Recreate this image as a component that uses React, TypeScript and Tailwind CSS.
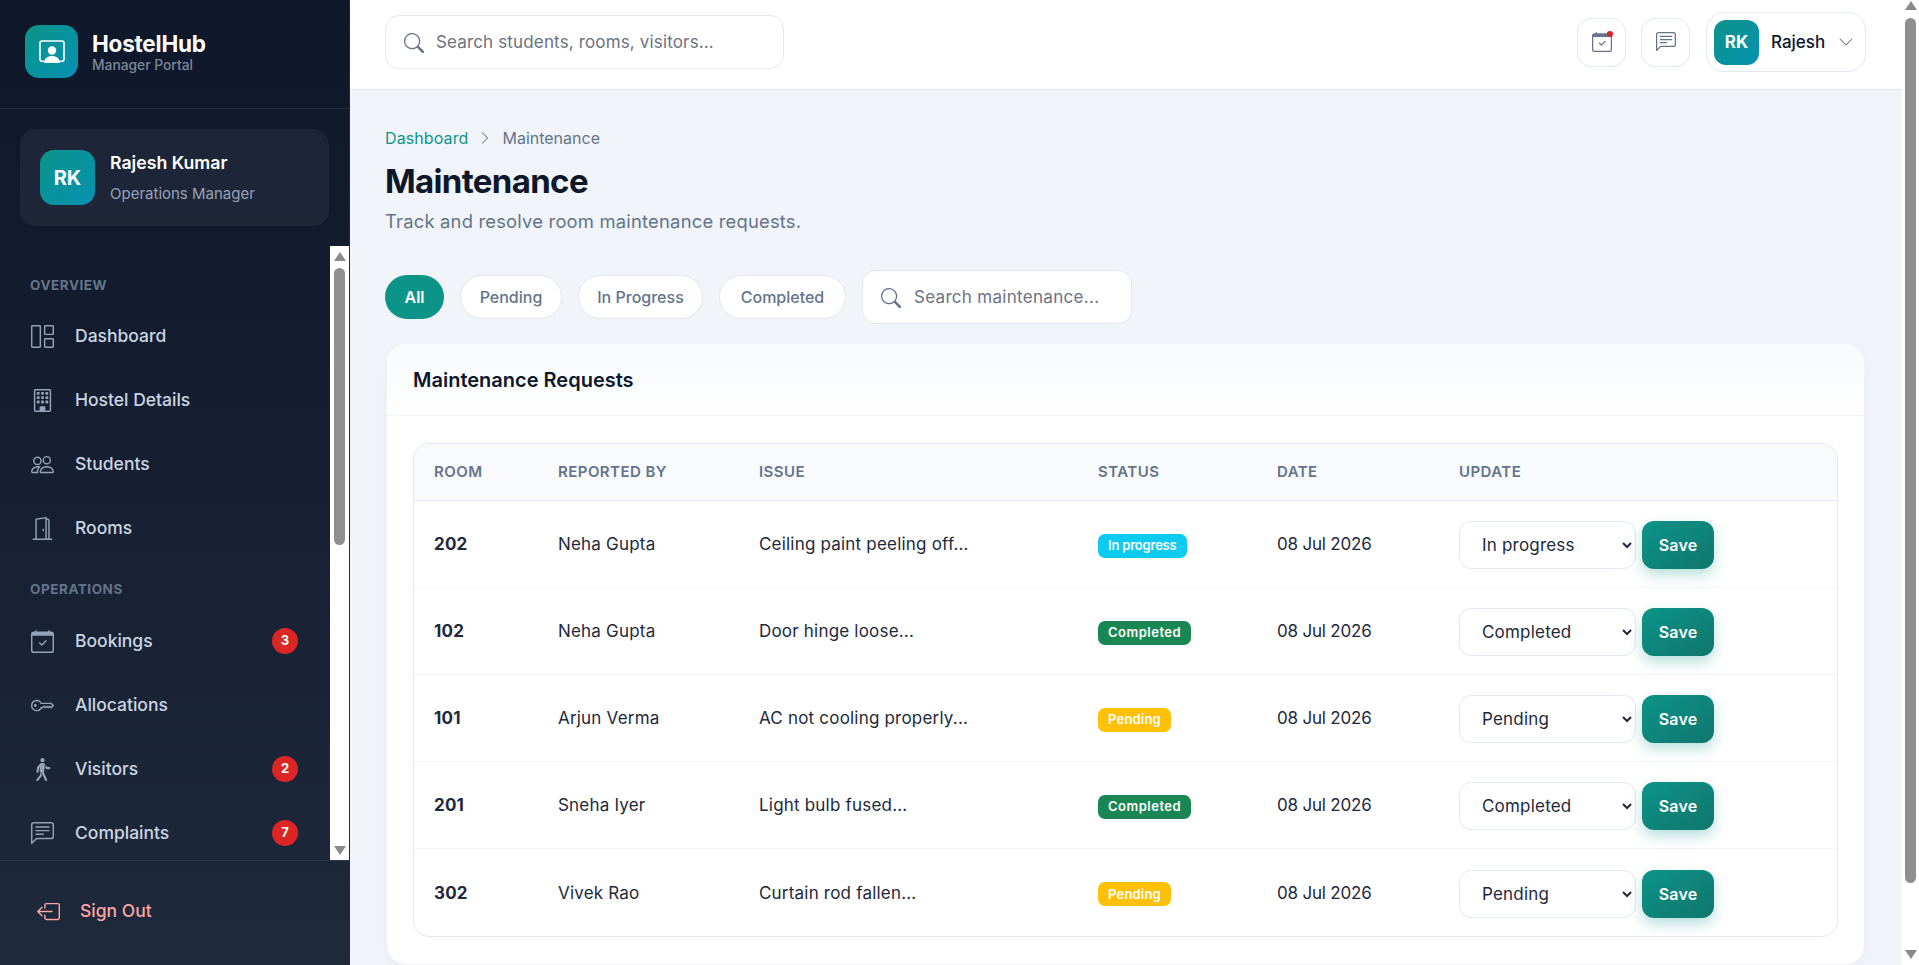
import type { ReactNode } from 'react';
import {
  BsBoxArrowLeft,
  BsBuilding,
  BsCalendarCheck,
  BsChatLeftText,
  BsChevronDown,
  BsChevronRight,
  BsDoorOpen,
  BsGrid1X2,
  BsKey,
  BsPeople,
  BsPersonWalking,
  BsSearch,
} from 'react-icons/bs';

const tealGradient = 'bg-gradient-to-br from-[#0d9488] to-[#0891b2]';

function LogoIcon() {
  return (
    <svg width="26" height="23" viewBox="0 0 26 23" fill="none">
      <path
        d="M5 21.2H3a2 2 0 0 1-2-2V3a2 2 0 0 1 2-2h20a2 2 0 0 1 2 2v16.2a2 2 0 0 1-2 2h-2"
        stroke="white"
        strokeWidth="1.6"
        strokeLinecap="round"
      />
      <circle cx="13" cy="10.5" r="4.2" fill="white" />
      <path d="M5.2 23c0-5 3.6-7 7.8-7s7.8 2 7.8 7z" fill="white" />
    </svg>
  );
}

function NavItem({ icon, label, badge }: { icon: ReactNode; label: string; badge?: number }) {
  return (
    <div className="flex h-[64px] shrink-0 items-center pr-[32px] pl-[30px] text-[17.5px] font-medium text-[#cbd5e1]">
      <span className="flex w-[24px] justify-center text-[23px] text-[#94a3b8]">{icon}</span>
      <span className="ml-[21px] flex-1">{label}</span>
      {badge ? (
        <span className="flex h-[26px] w-[26px] items-center justify-center rounded-full bg-[#dc2626] text-[13px] font-bold text-white">
          {badge}
        </span>
      ) : null}
    </div>
  );
}

function NavLabel({ children, className }: { children: string; className: string }) {
  return (
    <div className={`pl-[30px] text-[13.5px] leading-[18px] font-bold tracking-[0.04em] text-[#64748b] uppercase ${className}`}>
      {children}
    </div>
  );
}

function ScrollArrow({ down }: { down?: boolean }) {
  return (
    <div
      className={`mx-auto h-0 w-0 border-x-[6px] border-x-transparent ${
        down ? 'border-t-[9px] border-t-[#8a8a8a]' : 'border-b-[9px] border-b-[#8a8a8a]'
      }`}
    />
  );
}

function Sidebar() {
  return (
    <aside className="flex h-full w-[350px] shrink-0 flex-col border-r border-[#1e293b] bg-gradient-to-b from-[#0f172a] to-[#1e293b]">
      <div className="flex h-[109px] items-start gap-[14px] border-b border-white/[0.08] pt-[25px] pl-[25px]">
        <div className={`flex h-[53px] w-[53px] items-center justify-center rounded-[14px] ${tealGradient}`}>
          <LogoIcon />
        </div>
        <div className="pt-[5px]">
          <div className="text-[22.5px] leading-[28px] font-bold tracking-[-0.01em] text-white">HostelHub</div>
          <div className="text-[13.8px] leading-[15px] font-medium text-[#7c8798]">Manager Portal</div>
        </div>
      </div>

      <div className="mx-[20px] mt-[20px] flex h-[97px] w-[309px] items-center gap-[15px] rounded-[16px] bg-white/5 pl-[20px]">
        <div className={`flex h-[55px] w-[55px] items-center justify-center rounded-[14px] text-[20px] font-bold text-white ${tealGradient}`}>
          RK
        </div>
        <div>
          <div className="text-[17.7px] leading-[22px] font-semibold text-white">Rajesh Kumar</div>
          <div className="mt-[10px] text-[15px] leading-[20px] text-[#94a3b8]">Operations Manager</div>
        </div>
      </div>

      <div className="mt-[20px] flex min-h-0 flex-1">
        <nav className="flex min-w-0 flex-1 flex-col overflow-hidden">
          <NavLabel className="pt-[30px] pb-[10px]">Overview</NavLabel>
          <NavItem icon={<BsGrid1X2 />} label="Dashboard" />
          <NavItem icon={<BsBuilding />} label="Hostel Details" />
          <NavItem icon={<BsPeople />} label="Students" />
          <NavItem icon={<BsDoorOpen />} label="Rooms" />
          <NavLabel className="pt-[20px] pb-[11px]">Operations</NavLabel>
          <NavItem icon={<BsCalendarCheck />} label="Bookings" badge={3} />
          <NavItem icon={<BsKey />} label="Allocations" />
          <NavItem icon={<BsPersonWalking />} label="Visitors" badge={2} />
          <NavItem icon={<BsChatLeftText />} label="Complaints" badge={7} />
        </nav>
        <div className="flex w-[19px] flex-col items-center bg-white pt-[6px] pb-[5px]">
          <ScrollArrow />
          <div className="mt-[7px] h-[277px] w-[11px] rounded-full bg-[#8f8f8f]" />
          <div className="flex-1" />
          <ScrollArrow down />
        </div>
      </div>

      <div className="flex h-[105px] items-center border-t border-white/[0.08] pb-[3px] pl-[37px] text-[17.5px] font-medium text-[#fca5a5]">
        <BsBoxArrowLeft className="text-[23px]" />
        <span className="ml-[20px]">Sign Out</span>
      </div>
    </aside>
  );
}

function TopBar() {
  return (
    <header className="flex h-[90px] shrink-0 items-center justify-between border-b border-[#e2e8f0] bg-white pr-[36px] pb-[5px] pl-[35px]">
      <div className="flex h-[54px] w-[399px] items-center rounded-[14px] border border-[#e2e8f0] pt-[2px] pl-[18px] text-[17px] tracking-[0.15px] text-[#6b7280]">
        <BsSearch className="text-[20px] text-[#64748b]" />
        <span className="ml-[12px]">Search students, rooms, visitors...</span>
      </div>
      <div className="flex items-center gap-[15px]">
        <div className="relative flex h-[49px] w-[49px] items-center justify-center rounded-[14px] border border-[#e2e8f0] text-[20px] text-[#64748b]">
          <BsCalendarCheck />
          <span className="absolute top-[12px] right-[12px] h-[6px] w-[6px] rounded-full bg-[#dc2626]" />
        </div>
        <div className="flex h-[49px] w-[49px] items-center justify-center rounded-[14px] border border-[#e2e8f0] text-[20px] text-[#64748b]">
          <BsChatLeftText />
        </div>
        <div className="ml-px flex h-[60px] w-[160px] items-center rounded-[18px] border border-[#e2e8f0] pl-[7px]">
          <div className={`flex h-[45px] w-[45px] items-center justify-center rounded-[12px] pt-px text-[17px] font-bold text-white ${tealGradient}`}>
            RK
          </div>
          <span className="ml-[12px] pt-[2px] text-[17px] font-medium text-[#0f172a]">Rajesh</span>
          <BsChevronDown className="ml-[13px] text-[16px] text-[#64748b]" />
        </div>
      </div>
    </header>
  );
}

function FilterPill({ label, width, active }: { label: string; width: string; active?: boolean }) {
  return (
    <div
      className={`flex h-[44px] items-center justify-center rounded-full text-[16px] font-medium ${width} ${
        active ? 'bg-[#0d9488] font-semibold text-white' : 'border border-[#e2e8f0] bg-white text-[#64748b]'
      }`}
    >
      {label}
    </div>
  );
}

const statusStyles: Record<string, string> = {
  'In progress': 'bg-[#0dcaf0] tracking-[-0.2px]',
  Completed: 'bg-[#198754] tracking-[0.5px]',
  Pending: 'bg-[#ffc107]',
};

const requests = [
  { room: '202', by: 'Neha Gupta', issue: 'Ceiling paint peeling off...', status: 'In progress' },
  { room: '102', by: 'Neha Gupta', issue: 'Door hinge loose...', status: 'Completed' },
  { room: '101', by: 'Arjun Verma', issue: 'AC not cooling properly...', status: 'Pending' },
  { room: '201', by: 'Sneha Iyer', issue: 'Light bulb fused...', status: 'Completed' },
  { room: '302', by: 'Vivek Rao', issue: 'Curtain rod fallen...', status: 'Pending' },
];

function RequestsTable() {
  const th = 'border-b border-[#e2e8f0] pl-[20px] text-left text-[15px] font-semibold tracking-[0.03em] text-[#64748b] uppercase';
  return (
    <div className="overflow-hidden rounded-[16px] border border-[#e2e8f0]">
      <table className="w-full table-fixed border-separate border-spacing-0">
        <thead>
          <tr className="h-[57px] bg-[#f8fafc]">
            <th className={`${th} w-[124px]`}>Room</th>
            <th className={`${th} w-[201px]`}>Reported By</th>
            <th className={`${th} w-[339px]`}>Issue</th>
            <th className={`${th} w-[179px]`}>Status</th>
            <th className={`${th} w-[182px]`}>Date</th>
            <th className={th}>Update</th>
          </tr>
        </thead>
        <tbody>
          {requests.map((r, i) => {
            const cell = `h-[87px] pt-[2px] pl-[20px] text-[17px] tracking-[0.2px] text-[#1e293b] ${i < requests.length - 1 ? 'border-b border-[#f1f5f9]' : ''}`;
            return (
              <tr key={r.room}>
                <td className={`${cell} font-bold text-[#0f172a]`}>{r.room}</td>
                <td className={cell}>{r.by}</td>
                <td className={cell}>{r.issue}</td>
                <td className={cell}>
                  <span className={`inline-flex h-[24px] items-center rounded-[7px] px-[10px] text-[13px] font-semibold text-white ${statusStyles[r.status]}`}>
                    {r.status}
                  </span>
                </td>
                <td className={`${cell} !tracking-[-0.2px]`}>08 Jul 2026</td>
                <td className={cell}>
                  <div className="flex items-center gap-[6px]">
                    <select
                      defaultValue={r.status}
                      className="h-[48px] w-[177px] rounded-[12px] border border-[#e2e8f0] bg-white pl-[18px] text-[17px] text-[#1e293b]"
                    >
                      <option>Pending</option>
                      <option>In progress</option>
                      <option>Completed</option>
                    </select>
                    <button className="h-[48px] w-[72px] rounded-[12px] bg-gradient-to-br from-[#0d9488] to-[#0f766e] text-[16px] font-semibold text-white shadow-[0_6px_14px_rgba(13,148,136,0.3)]">
                      Save
                    </button>
                  </div>
                </td>
              </tr>
            );
          })}
        </tbody>
      </table>
    </div>
  );
}

export default function App() {
  return (
    <div className="flex h-screen overflow-hidden bg-[#f1f5f9] font-['Inter',sans-serif]">
      <Sidebar />
      <div className="flex min-w-0 flex-1 flex-col">
        <TopBar />
        <main className="min-h-0 flex-1 overflow-hidden pt-[36px] pr-[37px] pl-[35px]">
          <div className="flex h-[24px] items-center text-[16px]">
            <span className="tracking-[0.1px] text-[#0d9488]">Dashboard</span>
            <BsChevronRight className="mx-[10px] text-[14px] text-[#64748b]" />
            <span className="text-[#64748b]">Maintenance</span>
          </div>
          <h1 className="mt-[9px] text-[33px] leading-[44px] font-bold tracking-[-0.02em] text-[#0f172a]">Maintenance</h1>
          <p className="mt-[4px] text-[18.4px] leading-[28px] tracking-[0.2px] text-[#64748b]">Track and resolve room maintenance requests.</p>
          <div className="mt-[35px] flex items-center gap-[16px]">
            <FilterPill label="All" width="w-[59px]" active />
            <FilterPill label="Pending" width="w-[102px]" />
            <FilterPill label="In Progress" width="w-[125px]" />
            <FilterPill label="Completed" width="w-[127px]" />
            <div className="flex h-[54px] w-[270px] items-center rounded-[14px] border border-[#e2e8f0] bg-white pt-[2px] pl-[18px] text-[17px] tracking-[0.3px] text-[#6b7280]">
              <BsSearch className="text-[20px] text-[#64748b]" />
              <span className="ml-[13px]">Search maintenance...</span>
            </div>
          </div>
          <section className="mt-[19px] ml-px rounded-[20px] border border-[#eef2f6] bg-white shadow-[0_4px_16px_rgba(15,23,42,0.04)]">
            <div className="flex h-[72px] items-center rounded-t-[20px] border-b border-[#f1f5f9] bg-gradient-to-b from-[#f8fafc] to-white pl-[26px] text-[20px] font-semibold text-[#0f172a]">
              Maintenance Requests
            </div>
            <div className="px-[26px] py-[27px]">
              <RequestsTable />
            </div>
          </section>
        </main>
      </div>
      <div className="flex h-full w-[17px] shrink-0 flex-col items-center bg-white pt-px pb-[6px]">
        <ScrollArrow />
        <div className="mt-[8px] h-[865px] w-[11px] rounded-full bg-[#8f8f8f]" />
        <div className="flex-1" />
        <ScrollArrow down />
      </div>
    </div>
  );
}
